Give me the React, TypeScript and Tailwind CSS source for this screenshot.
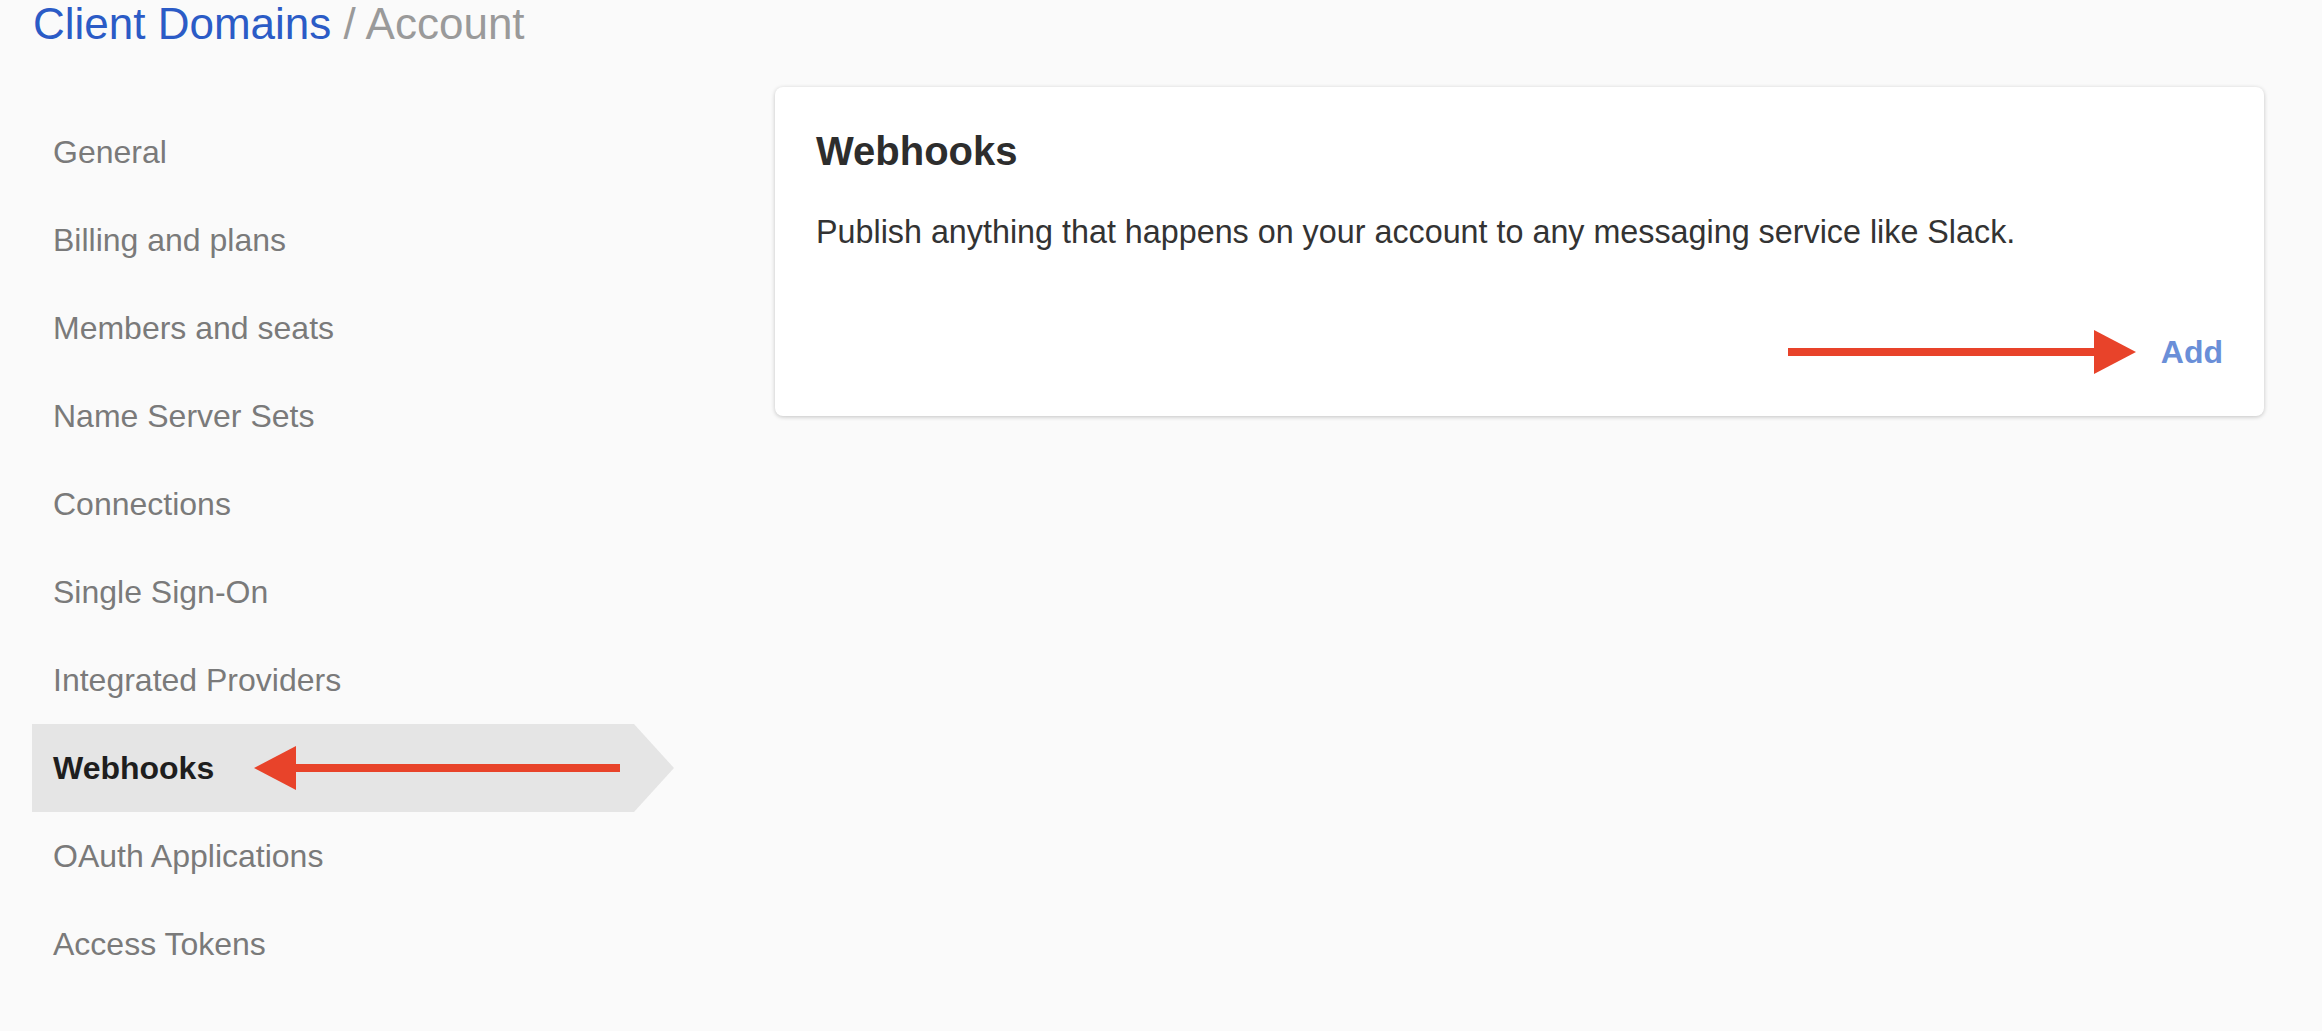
const navItems = [
  "General",
  "Billing and plans",
  "Members and seats",
  "Name Server Sets",
  "Connections",
  "Single Sign-On",
  "Integrated Providers",
  "Webhooks",
  "OAuth Applications",
  "Access Tokens",
]

function ArrowLeft() {
  return (
    <svg width="366" height="44" viewBox="0 0 366 44" className="shrink-0">
      <rect x="40" y="18" width="326" height="8" fill="#e8432a" />
      <polygon points="0,22 42,0 42,44" fill="#e8432a" />
    </svg>
  )
}

function ArrowRight() {
  return (
    <svg width="348" height="44" viewBox="0 0 348 44" className="shrink-0">
      <rect x="0" y="18" width="308" height="8" fill="#e8432a" />
      <polygon points="348,22 306,0 306,44" fill="#e8432a" />
    </svg>
  )
}

export default function App() {
  return (
    <div className="min-h-[1034px] bg-[#fafafa] font-['Liberation_Sans',Arial,sans-serif]">
      {/* Breadcrumb */}
      <div className="-mt-[3px] pl-[33px] text-[44px] leading-[53px]">
        <span className="text-[#2b5bc6]">Client Domains</span>
        <span className="text-[#9a9a9a]"> / Account</span>
      </div>

      <div className="mt-[37px] flex pl-[32px] pr-[58px]">
        {/* Sidebar */}
        <nav className="mt-[21px] w-[642px] shrink-0">
          {navItems.map((item) =>
            item === "Webhooks" ? (
              <div
                key={item}
                className="flex h-[88px] items-center gap-[40px] bg-[#e5e5e5] pl-[21px] text-[32px] font-bold text-[#1e1e1e] [clip-path:polygon(0_0,602px_0,100%_50%,602px_100%,0_100%)]"
              >
                {item}
                <ArrowLeft />
              </div>
            ) : (
              <div
                key={item}
                className="flex h-[88px] items-center pl-[21px] text-[32px] text-[#7a7a7a]"
              >
                {item}
              </div>
            )
          )}
        </nav>

        {/* Card */}
        <div className="ml-[101px] flex-1 self-start rounded-lg bg-white px-[41px] pt-[40px] pb-[34px] shadow-[0_1px_4px_rgba(0,0,0,0.22)]">
          <h2 className="text-[40px] font-bold leading-[48px] text-[#2d2d2d]">
            Webhooks
          </h2>
          <p className="mt-[37px] text-[32.3px] leading-[40px] text-[#333]">
            Publish anything that happens on your account to any messaging service like Slack.
          </p>
          <div className="mt-[70px] flex h-[60px] items-center justify-end gap-[25px]">
            <ArrowRight />
            <span className="text-[32px] font-bold text-[#6a8fd8]">Add</span>
          </div>
        </div>
      </div>
    </div>
  )
}
